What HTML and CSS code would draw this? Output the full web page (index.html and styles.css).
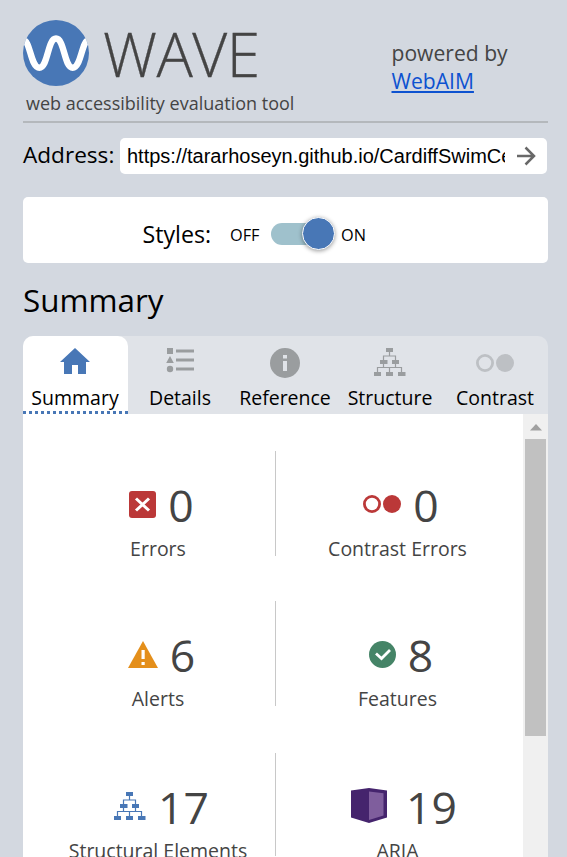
FILE: index.html
```html
<!DOCTYPE html>
<html lang="en">
<head>
<meta charset="utf-8">
<title>WAVE</title>
<link rel="stylesheet" href="styles.css">
</head>
<body>
<svg class="defs" width="0" height="0" aria-hidden="true">
  <symbol id="tree" viewBox="0 0 32 29">
    <path fill="currentColor" d="M12 0h7v4h-7zM6 12h7.500v4H6zM18 12h7v4h-7zM0 24h7v4H0zM12 24h7v4h-7zM24 24h7.500v4H24z"/>
    <path fill="none" stroke="currentColor" stroke-width="1.200" d="M15.500 4v4M9.500 12V8h12v4M9.500 16v4M21.500 16v4M3.500 24v-4.500h24V24M15.500 19.500V24"/>
  </symbol>
  <symbol id="contrast" viewBox="0 0 38 18">
    <circle cx="9" cy="9" r="7.600" fill="none" stroke="currentColor" stroke-width="2.800"/>
    <circle cx="29" cy="9" r="9" fill="currentColor"/>
  </symbol>
</svg>
<header class="header">
  <div class="brand">
    <div class="logo">
      <svg width="66" height="66" viewBox="0 0 66 66"><defs><clipPath id="disc"><circle cx="33" cy="33" r="33"/></clipPath></defs><circle cx="33" cy="33" r="33" fill="#4877b6"/><path clip-path="url(#disc)" d="M0 20C7.500 20 7.500 47.700 16.300 47.700S24.500 18.500 33 18.500s8 29.200 16.700 29.200S58.500 20 66 20" fill="none" stroke="#fff" stroke-width="6.400"/></svg>
      <span class="wordmark">WAVE</span>
    </div>
    <div class="tagline">web accessibility evaluation tool</div>
  </div>
  <div class="powered">powered by<br><a href="#">WebAIM</a></div>
</header>
<form class="address">
  <label class="address-label">Address:</label>
  <div class="field"><span class="url">https://tararhoseyn.github.io/CardiffSwimCentre</span>
    <svg width="20" height="20" viewBox="0 0 20 20"><path d="M1 10h17M9.500 1.500l8.500 8.500-8.500 8.500" fill="none" stroke="#686868" stroke-width="2.500"/></svg>
  </div>
</form>
<div class="styles">
  <span class="styles-label">Styles:</span><span class="off">OFF</span><span class="track"><span class="knob"></span></span><span class="on">ON</span>
</div>
<h2 class="title">Summary</h2>
<nav class="tabs">
  <div class="tab active"><svg width="30" height="32" viewBox="0 0 30 32"><path fill="#4877b6" d="M15 2 0 16h4v12h8v-9h6v9h8V16h4z"/></svg><span>Summary</span></div>
  <div class="tab"><svg width="28" height="32" viewBox="0 0 28 32"><path fill="#9a9d9f" d="M1 2h6v6H1zM4 10l3.800 7H.2zM10 3.500h18v3H10zM10 12.500h18v3H10zM10 21.500h18v3H10z"/><circle cx="4" cy="23" r="3.200" fill="#9a9d9f"/></svg><span>Details</span></div>
  <div class="tab"><svg width="30" height="32" viewBox="0 0 30 32"><circle cx="15" cy="17" r="15" fill="#9a9d9f"/><path fill="#e0e3e8" d="M13 9h4v3.500h-4zM13 15h4v10h-4z"/></svg><span>Reference</span></div>
  <div class="tab"><svg width="32" height="32"><use href="#tree" y="2" width="32" height="29"/></svg><span>Structure</span></div>
  <div class="tab muted"><svg width="38" height="32"><use href="#contrast" y="8" width="38" height="18"/></svg><span>Contrast</span></div>
</nav>
<main class="panel">
  <div class="stats">
    <div class="stat"><div class="count"><svg width="27" height="27" viewBox="0 0 27 27"><rect width="27" height="27" rx="3" fill="#bb3838"/><path d="m7 7.500 13 12M20 7.500l-13 12" stroke="#fff" stroke-width="3"/></svg><b>0</b></div><div class="name">Errors</div></div>
    <div class="stat"><div class="count"><svg class="red" width="38" height="18"><use href="#contrast" width="38" height="18"/></svg><b>0</b></div><div class="name">Contrast Errors</div></div>
    <div class="stat"><div class="count"><svg width="30" height="27" viewBox="0 0 30 27"><path d="m15 0 15 27H0z" fill="#e48f1b"/><path d="M13.500 9h3.200v9h-3.200zM13.500 21h3.200v3h-3.200z" fill="#fff"/></svg><b>6</b></div><div class="name">Alerts</div></div>
    <div class="stat"><div class="count"><svg width="27" height="27" viewBox="0 0 27 27"><circle cx="13.500" cy="13.500" r="13.500" fill="#458467"/><path d="m7 12.500 5.500 5 8.500-8.500" fill="none" stroke="#fff" stroke-width="2.800"/></svg><b>8</b></div><div class="name">Features</div></div>
    <div class="stat last"><div class="count"><svg class="blue" width="32" height="29"><use href="#tree" width="32" height="29"/></svg><b>17</b></div><div class="name">Structural Elements</div></div>
    <div class="stat last"><div class="count aria"><svg width="36" height="36" viewBox="0 0 36 36"><path d="M0 2.500 18 0l18 2.500v27L18 35 0 29.500z" fill="#45246d"/><path d="m18 3.500 14.500 1.700v22.300L18 32z" fill="#7f5e9d"/></svg><b>19</b></div><div class="name">ARIA</div></div>
  </div>
  <div class="scrollbar"><svg width="12" height="7" viewBox="0 0 12 7"><path d="m0 6.500 6-6.500 6 6.500z" fill="#a0a0a0"/></svg><span class="thumb"></span></div>
</main>
</body>
</html>
```
FILE: styles.css
```css
* { box-sizing: border-box; }
body { margin: 0; padding: 0 19px 0 23px; height: 857px; overflow: hidden; background: #d3d8e0; color: #000; font-family: "Open Sans", sans-serif; display: flex; flex-direction: column; }
svg { display: block; flex: none; }
.defs { position: absolute; }
.header { height: 123px; flex: none; border-bottom: 2px solid #b4b8bc; display: flex; color: #444; }
.brand { width: 368.500px; padding-top: 20px; }
.logo { display: flex; height: 66px; }
.wordmark { margin: 2px 0 0 14px; font-size: 60.500px; font-weight: 300; line-height: 64px; letter-spacing: -.5px; white-space: nowrap; -webkit-text-stroke: .3px #444; }
.tagline { margin: 5px 0 0 3px; font-size: 18px; line-height: 25px; white-space: nowrap; }
.powered { padding-top: 39px; font-size: 21.100px; line-height: 28px; white-space: nowrap; }
.powered a { color: #0d52d0; }
.address { margin: 0; height: 51px; flex: none; padding-top: 15px; display: flex; justify-content: space-between; width: 524px; }
.address-label { font-size: 22.600px; line-height: 33px; }
.field { width: 427px; height: 36px; background: #fff; border-radius: 5px; display: flex; align-items: center; padding: 0 11px 0 7px; justify-content: space-between; }
.url { width: 378px; overflow: hidden; white-space: nowrap; font: 20px/30px "Liberation Sans", sans-serif; }
.styles { height: 66px; flex: none; margin-top: 23px; background: #fff; border-radius: 5px; display: flex; align-items: center; padding: 9px 0 0 119.500px; }
.styles-label { width: 87.500px; font-size: 23.200px; line-height: 32px; margin-top: -2px; }
.off { width: 41px; font-size: 16.300px; }
.track { width: 62px; height: 22px; margin-top: -2px; border-radius: 11px; background: #9fc1cc; display: flex; align-items: center; justify-content: flex-end; }
.knob { width: 33px; height: 33px; margin-right: -1.500px; flex: none; border-radius: 50%; border: 1px solid #fff; background: #4877b6; box-shadow: 0 1px 4px rgba(0,0,0,.4); }
.on { margin-left: 8px; font-size: 16.300px; }
.title { margin: 14px 0 14px; font-size: 31.400px; line-height: 45px; font-weight: 400; }
.tabs { height: 78px; flex: none; background: #e0e3e8; border-radius: 10px 10px 0 0; display: grid; grid-template-columns: repeat(5, 105px); }
.tab { padding-top: 10px; display: flex; flex-direction: column; align-items: center; font-size: 19.500px; line-height: 28px; color: #9a9d9f; }
.tab svg { margin-right: 1px; }
.tab span { margin: 6px 1px 0 0; color: #000; white-space: nowrap; }
.tab.active { background: repeating-linear-gradient(90deg, #4877b6 0 3px, #fff 3px 6px) bottom / 100% 3px no-repeat #fff; border-radius: 10px 10px 0 0; }
.tab.muted { color: #bdc0c4; }
.panel { flex: 1; min-height: 0; background: #fff; display: flex; overflow: hidden; }
.stats { width: 500px; padding: 37px 5px 0 17px; display: grid; grid-template-columns: 236px 242px; grid-template-rows: 105px 105px 105px; row-gap: 45px; color: #444; }
.stat { text-align: center; }
.stat:nth-child(odd) { border-right: 1px solid #c8c8c8; }
.last { margin-top: 2px; }
.count { height: 81px; padding: 26px 0 0 8px; display: flex; justify-content: center; align-items: center; }
.count b { font-weight: 400; font-size: 44.500px; line-height: 55px; margin: 0 0 0 12px; }
.count .red { margin-top: -1px; }
.count.aria { padding-left: 14px; }
.aria svg { margin: -2px 0 0; }
.aria b { margin-left: 19px; }
.name { font-size: 19.500px; line-height: 34px; white-space: nowrap; margin-left: 1px; }
.red { color: #bb3838; }
.blue { color: #4877b6; }
.scrollbar { width: 25px; background: #f0f0f0; padding-top: 10px; display: flex; flex-direction: column; align-items: center; }
.thumb { width: 21px; height: 297px; flex: none; margin-top: 8px; background: #c1c1c1; }
```
